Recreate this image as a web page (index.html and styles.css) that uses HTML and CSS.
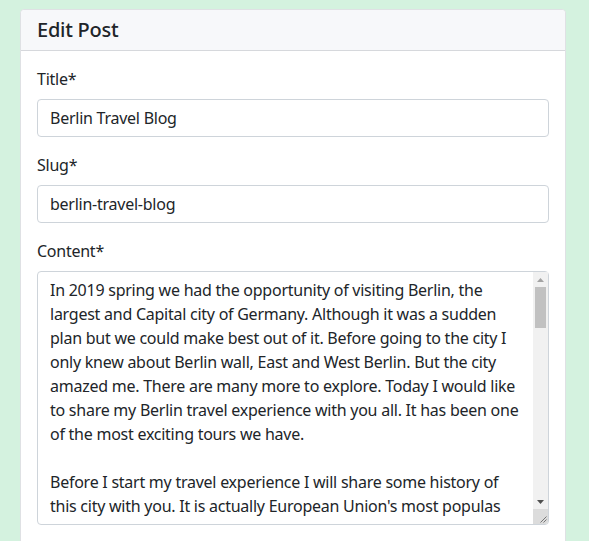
FILE: index.html
```html
<!DOCTYPE html>
<html lang="en">
<head>
<meta charset="utf-8">
<title>Edit Post</title>
<link rel="stylesheet" href="styles.css">
</head>
<body>
<div class="card">
  <div class="card-header"><h5 class="card-title">Edit Post</h5></div>
  <form class="card-body">
    <div class="field">
      <label class="label" for="title">Title*</label>
      <input class="control" id="title" type="text" value="Berlin Travel Blog">
    </div>
    <div class="field">
      <label class="label" for="slug">Slug*</label>
      <input class="control" id="slug" type="text" value="berlin-travel-blog">
    </div>
    <div class="field">
      <label class="label" for="content">Content*</label>
      <div class="textarea-wrap">
        <textarea class="control textarea" id="content" rows="10">In 2019 spring we had the opportunity of visiting Berlin, the largest and Capital city of Germany. Although it was a sudden plan but we could make best out of it. Before going to the city I only knew about Berlin wall, East and West Berlin. But the city amazed me. There are many more to explore. Today I would like to share my Berlin travel experience with you all. It has been one of the most exciting tours we have.

Before I start my travel experience I will share some history of this city with you. It is actually European Union's most populas city with over 3.7 million people living within its city limits. It is also one of the greenest cities in Europe, with parks, forests and lakes all around. Berlin is a world city of culture, politics, media and science.

Berlin is well known for its festivals, diverse architecture, nightlife, contemporary arts and a very high quality of living.</textarea>
        <div class="scrollbar" aria-hidden="true">
          <div class="sb-btn"><svg width="7" height="4" viewBox="0 0 7 4"><path d="M0 4L3.5 0L7 4Z" fill="#a3a3a3"/></svg></div>
          <div class="sb-track"><div class="sb-thumb"></div></div>
          <div class="sb-btn"><svg width="7" height="4" viewBox="0 0 7 4"><path d="M0 0L7 0L3.5 4Z" fill="#505050"/></svg></div>
          <div class="sb-corner"><svg width="15" height="15" viewBox="0 0 15 15"><path d="M13.5 7.5L7.5 13.5M13.5 10.5L10.5 13.5" stroke="#777" stroke-width="1"/></svg></div>
        </div>
      </div>
    </div>
  </form>
</div>
</body>
</html>
```
FILE: styles.css
```css
html, body {
  margin: 0;
  padding: 0;
}
body {
  background: #d4f2df;
  font-family: "Noto Sans", "DejaVu Sans", sans-serif;
  font-size: 16px;
  line-height: 24px;
  letter-spacing: -0.25px;
  color: #212529;
  padding: 9px 23px 0 20px;
  height: 541px;
  box-sizing: border-box;
  overflow: hidden;
}
.card {
  background: #fff;
  border: 1px solid #dfe1e4;
  border-radius: 4px;
}
.card-header {
  background: #f7f8fa;
  border-bottom: 1px solid #d6d8dc;
  padding: 8px 16px;
  border-radius: 4px 4px 0 0;
}
.card-title {
  margin: 0;
  font-size: 20px;
  line-height: 24px;
  font-weight: 500;
}
.card-body {
  padding: 16px;
  margin: 0;
}
.field {
  margin-bottom: 16px;
}
.label {
  display: block;
  margin-bottom: 8px;
}
.control {
  display: block;
  width: 100%;
  box-sizing: border-box;
  height: 38px;
  padding: 6px 12px;
  font: inherit;
  line-height: 24px;
  letter-spacing: -0.25px;
  color: #212529;
  background: #fff;
  border: 1px solid #ced4da;
  border-radius: 4px;
  margin: 0;
}
.textarea-wrap {
  position: relative;
}
.textarea {
  height: 254px;
  resize: none;
  overflow: hidden;
  padding-right: 27px;
}
.scrollbar {
  position: absolute;
  top: 1px;
  right: 1px;
  bottom: 1px;
  width: 15px;
  background: #f1f1f1;
  display: flex;
  flex-direction: column;
  border-bottom-right-radius: 3px;
  overflow: hidden;
}
.sb-btn {
  height: 15px;
  flex: none;
  display: flex;
  align-items: center;
  justify-content: center;
}
.sb-track {
  flex: 1;
  padding: 0 2px;
}
.sb-thumb {
  height: 41px;
  background: #c1c1c1;
}
.sb-corner {
  height: 15px;
  flex: none;
  background: #dcdcdc;
}
.sb-corner svg {
  display: block;
}
```
